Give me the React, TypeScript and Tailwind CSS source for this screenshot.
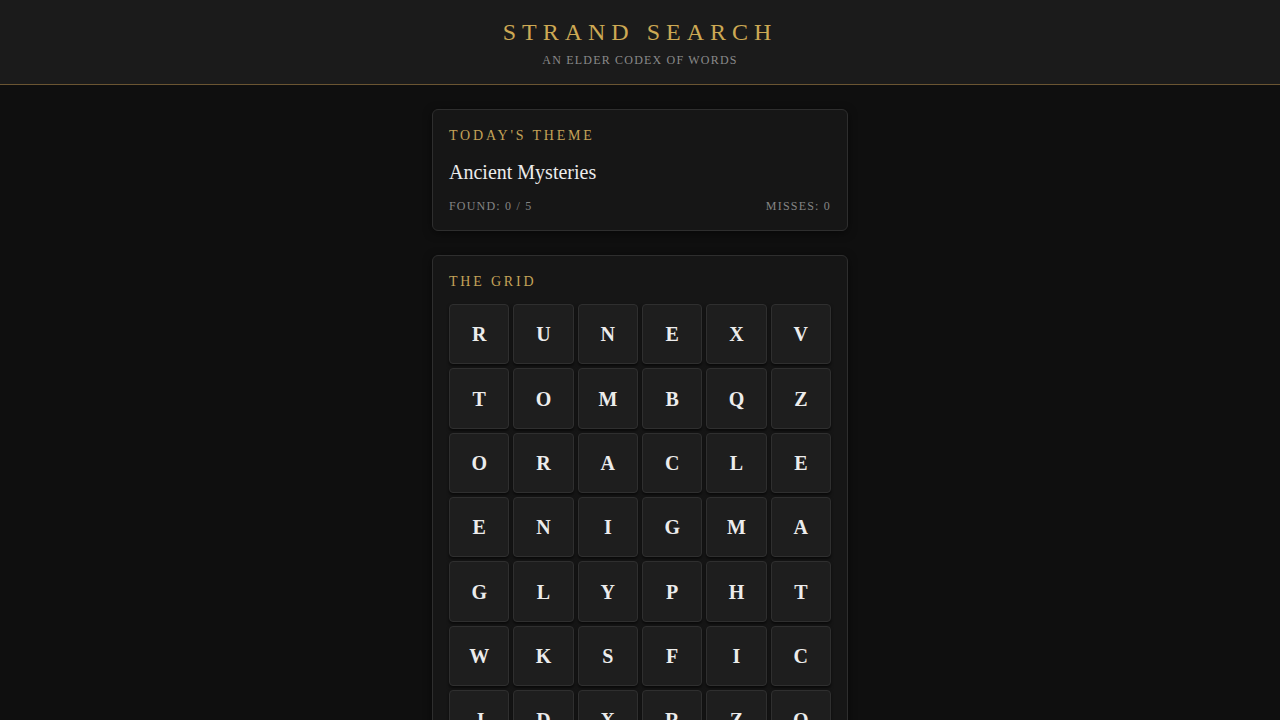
const GRID = [
  ['R', 'U', 'N', 'E', 'X', 'V'],
  ['T', 'O', 'M', 'B', 'Q', 'Z'],
  ['O', 'R', 'A', 'C', 'L', 'E'],
  ['E', 'N', 'I', 'G', 'M', 'A'],
  ['G', 'L', 'Y', 'P', 'H', 'T'],
  ['W', 'K', 'S', 'F', 'I', 'C'],
  ['J', 'D', 'X', 'R', 'Z', 'O'],
];

export default function App() {
  return (
    <div className="min-h-screen bg-[#0f0f0f] font-['Liberation_Serif',serif] text-[#e8e8e8]">
      <header className="bg-[#1b1b1b] border-b border-[#6b5532] pt-[17px] pb-[16px] text-center">
        <h1 className="text-[24px] leading-[30px] tracking-[0.25em] text-[#cda954]">STRAND SEARCH</h1>
        <p className="mt-[5px] text-[12px] leading-[16px] tracking-[0.1em] text-[#8a8a8a]">AN ELDER CODEX OF WORDS</p>
      </header>

      <main className="mx-auto w-[416px] pt-[24px] flex flex-col gap-[24px]">
        <section className="rounded-md border border-[#2e2e2e] bg-[#161616] px-4 pt-[16px] pb-[16px] shadow-[0_2px_8px_rgba(0,0,0,0.5)]">
          <h2 className="text-[14px] leading-[20px] tracking-[0.2em] text-[#c4a358]">TODAY'S THEME</h2>
          <p className="mt-[14px] text-[20px] leading-[25px] text-[#ececec]">Ancient Mysteries</p>
          <div className="mt-[13px] flex justify-between text-[12px] leading-[16px] tracking-[0.1em] text-[#858585]">
            <span>FOUND: 0 / 5</span>
            <span>MISSES: 0</span>
          </div>
        </section>

        <section className="rounded-md border border-[#2e2e2e] bg-[#161616] px-4 pt-[16px] pb-[16px] shadow-[0_2px_8px_rgba(0,0,0,0.5)]">
          <h2 className="text-[14px] leading-[20px] tracking-[0.2em] text-[#c4a358]">THE GRID</h2>
          <div className="mt-[12px] grid grid-cols-6 gap-[4px]">
            {GRID.flat().map((l, i) => (
              <div
                key={i}
                className="aspect-square flex items-center justify-center rounded-[4px] border border-[#2f2f2f] bg-[#1e1e1e] shadow-[0_2px_3px_rgba(0,0,0,0.6)] font-bold text-[20px] text-[#ececec]"
              >
                {l}
              </div>
            ))}
          </div>
        </section>
      </main>
    </div>
  );
}
